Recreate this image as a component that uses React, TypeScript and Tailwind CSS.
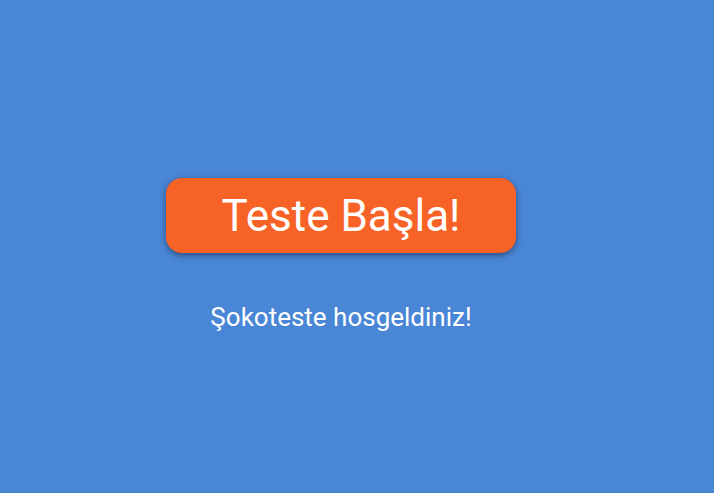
const App = () => {
  return (
    <div
      className="flex h-[493px] w-full flex-col items-center bg-[#4a86d6] pt-[178px] pr-[32px]"
      style={{ fontFamily: "Roboto, 'Liberation Sans', sans-serif" }}
    >
      <button className="flex h-[75px] w-[350px] items-center justify-center rounded-[16px] bg-[#f76227] text-[44px] text-white shadow-[0_2px_6px_rgba(0,0,0,0.45)]">
        Teste Başla!
      </button>
      <p className="mt-[48px] text-[26px] leading-[32px] text-white">Şokoteste hosgeldiniz!</p>
    </div>
  );
};

export default App;
